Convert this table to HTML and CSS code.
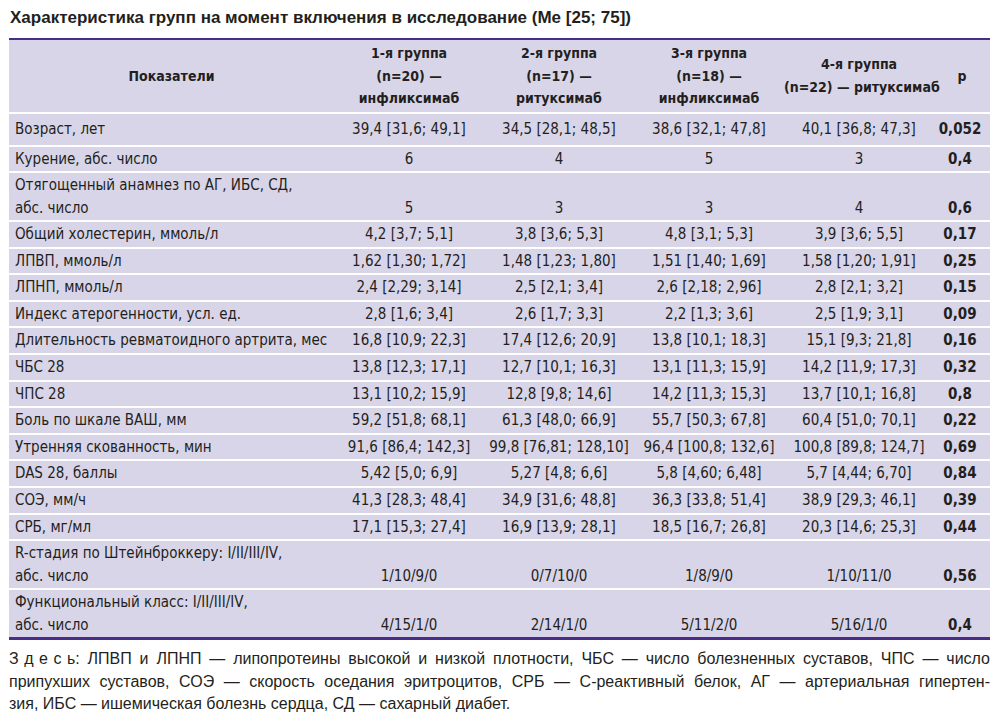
FILE: index.html
```html
<!DOCTYPE html>
<html lang="ru">
<head>
<meta charset="utf-8">
<link rel="stylesheet" href="styles.css">
</head>
<body>
<div class="page">
  <h1 class="title">Характеристика групп на момент включения в исследование (Me [25; 75])</h1>
  <table class="data">
    <colgroup>
      <col class="c-label">
      <col class="c-grp"><col class="c-grp"><col class="c-grp"><col class="c-grp">
      <col class="c-p">
    </colgroup>
    <thead>
      <tr>
        <th>Показатели</th>
        <th>1-я группа<br>(n=20) —<br>инфликсимаб</th>
        <th>2-я группа<br>(n=17) —<br>ритуксимаб</th>
        <th>3-я группа<br>(n=18) —<br>инфликсимаб</th>
        <th>4-я группа<br>(n=22) — ритуксимаб</th>
        <th>p</th>
      </tr>
    </thead>
    <tbody>
      <tr class="first"><td>Возраст, лет</td><td>39,4 [31,6; 49,1]</td><td>34,5 [28,1; 48,5]</td><td>38,6 [32,1; 47,8]</td><td>40,1 [36,8; 47,3]</td><td>0,052</td></tr>
      <tr><td>Курение, абс. число</td><td>6</td><td>4</td><td>5</td><td>3</td><td>0,4</td></tr>
      <tr class="dbl"><td>Отягощенный анамнез по АГ, ИБС, СД,<br>абс. число</td><td>5</td><td>3</td><td>3</td><td>4</td><td>0,6</td></tr>
      <tr><td>Общий холестерин, ммоль/л</td><td>4,2 [3,7; 5,1]</td><td>3,8 [3,6; 5,3]</td><td>4,8 [3,1; 5,3]</td><td>3,9 [3,6; 5,5]</td><td>0,17</td></tr>
      <tr><td>ЛПВП, ммоль/л</td><td>1,62 [1,30; 1,72]</td><td>1,48 [1,23; 1,80]</td><td>1,51 [1,40; 1,69]</td><td>1,58 [1,20; 1,91]</td><td>0,25</td></tr>
      <tr><td>ЛПНП, ммоль/л</td><td>2,4 [2,29; 3,14]</td><td>2,5 [2,1; 3,4]</td><td>2,6 [2,18; 2,96]</td><td>2,8 [2,1; 3,2]</td><td>0,15</td></tr>
      <tr><td>Индекс атерогенности, усл. ед.</td><td>2,8 [1,6; 3,4]</td><td>2,6 [1,7; 3,3]</td><td>2,2 [1,3; 3,6]</td><td>2,5 [1,9; 3,1]</td><td>0,09</td></tr>
      <tr><td>Длительность ревматоидного артрита, мес</td><td>16,8 [10,9; 22,3]</td><td>17,4 [12,6; 20,9]</td><td>13,8 [10,1; 18,3]</td><td>15,1 [9,3; 21,8]</td><td>0,16</td></tr>
      <tr><td>ЧБС 28</td><td>13,8 [12,3; 17,1]</td><td>12,7 [10,1; 16,3]</td><td>13,1 [11,3; 15,9]</td><td>14,2 [11,9; 17,3]</td><td>0,32</td></tr>
      <tr><td>ЧПС 28</td><td>13,1 [10,2; 15,9]</td><td>12,8 [9,8; 14,6]</td><td>14,2 [11,3; 15,3]</td><td>13,7 [10,1; 16,8]</td><td>0,8</td></tr>
      <tr><td>Боль по шкале ВАШ, мм</td><td>59,2 [51,8; 68,1]</td><td>61,3 [48,0; 66,9]</td><td>55,7 [50,3; 67,8]</td><td>60,4 [51,0; 70,1]</td><td>0,22</td></tr>
      <tr><td>Утренняя скованность, мин</td><td>91,6 [86,4; 142,3]</td><td>99,8 [76,81; 128,10]</td><td>96,4 [100,8; 132,6]</td><td>100,8 [89,8; 124,7]</td><td>0,69</td></tr>
      <tr><td>DAS 28, баллы</td><td>5,42 [5,0; 6,9]</td><td>5,27 [4,8; 6,6]</td><td>5,8 [4,60; 6,48]</td><td>5,7 [4,44; 6,70]</td><td>0,84</td></tr>
      <tr><td>СОЭ, мм/ч</td><td>41,3 [28,3; 48,4]</td><td>34,9 [31,6; 48,8]</td><td>36,3 [33,8; 51,4]</td><td>38,9 [29,3; 46,1]</td><td>0,39</td></tr>
      <tr><td>СРБ, мг/мл</td><td>17,1 [15,3; 27,4]</td><td>16,9 [13,9; 28,1]</td><td>18,5 [16,7; 26,8]</td><td>20,3 [14,6; 25,3]</td><td>0,44</td></tr>
      <tr class="dbl"><td>R-стадия по Штейнброккеру: I/II/III/IV,<br>абс. число</td><td>1/10/9/0</td><td>0/7/10/0</td><td>1/8/9/0</td><td>1/10/11/0</td><td>0,56</td></tr>
      <tr class="dbl last"><td>Функциональный класс: I/II/III/IV,<br>абс. число</td><td>4/15/1/0</td><td>2/14/1/0</td><td>5/11/2/0</td><td>5/16/1/0</td><td>0,4</td></tr>
    </tbody>
  </table>
  <div class="note">
    <span class="note-line"><span class="spaced">Здес</span>ь: ЛПВП и ЛПНП — липопротеины высокой и низкой плотности, ЧБС — число болезненных суставов, ЧПС — число</span>
    <span class="note-line">припухших суставов, СОЭ — скорость оседания эритроцитов, СРБ — С-реактивный белок, АГ — артериальная гипертен-</span>
    <span class="note-line end">зия, ИБС — ишемическая болезнь сердца, СД — сахарный диабет.</span>
  </div>
</div>
</body>
</html>
```

FILE: styles.css
```css
* { box-sizing: border-box; }
html, body { margin: 0; padding: 0; background: #ffffff; }
body {
  color: #231f20;
  font-family: "Liberation Sans", Arial, sans-serif;
}
.page {
  width: 1000px;
  padding: 6px 10px 0 9px;
}
.title {
  margin: 0 0 0 1px;
  font-family: "Liberation Sans", Arial, sans-serif;
  font-weight: bold;
  font-size: 17px;
  line-height: 24px;
  color: #231f20;
}
.data {
  margin-top: 8px;
  width: 981px;
  border-collapse: collapse;
  table-layout: fixed;
  font-family: "DejaVu Sans Condensed", "DejaVu Sans", sans-serif;
  font-size: 15px;
  color: #231f20;
  background: #d9d5e9;
  border-top: 2px solid #4a2c8a;
  border-bottom: 3px solid #4a2c8a;
}
.c-label { width: 325px; }
.c-grp { width: 150px; }
.c-p { width: 56px; }
.data th {
  font-weight: bold;
  font-size: 14px;
  line-height: 22.5px;
  text-align: center;
  vertical-align: middle;
  white-space: nowrap;
  padding: 2px 0 2px;
  height: 73px;
  border-bottom: 2px solid #ffffff;
}
.data td {
  line-height: 23px;
  padding: 1px 0 0.6px;
  text-align: center;
  vertical-align: bottom;
  border-bottom: 2px solid #ffffff;
  white-space: nowrap;
}
.data td:first-child {
  text-align: left;
  padding-left: 6px;
}
.data td:last-child {
  font-weight: bold;
  padding-right: 4px;
}
.data tr.first td {
  padding-top: 4px;
  padding-bottom: 4px;
}
.data tr.dbl td {
  padding-top: 0.5px;
  padding-bottom: 0.5px;
}
.data tr.last td { border-bottom: none; }
.note {
  margin: 8px 0 0;
  font-family: "Liberation Sans", Arial, sans-serif;
  font-size: 16px;
  line-height: 22.5px;
  color: #231f20;
}
.note-line {
  display: block;
  text-align: justify;
  text-align-last: justify;
}
.note-line.end {
  text-align: left;
  text-align-last: left;
}
.spaced { letter-spacing: 5.5px; }
```
